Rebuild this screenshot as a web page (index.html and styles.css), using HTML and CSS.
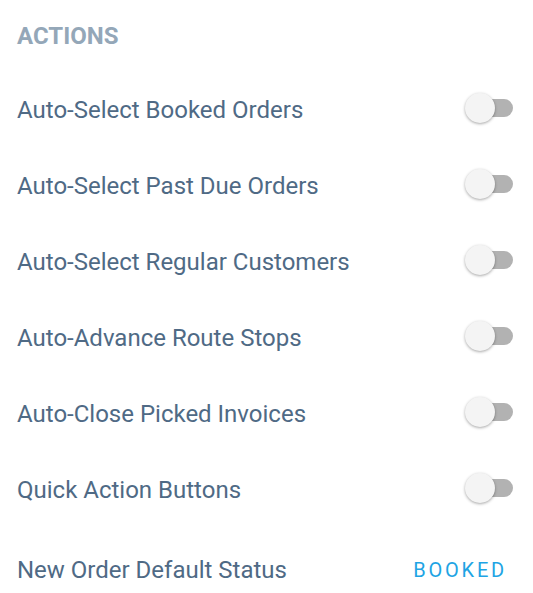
FILE: index.html
```html
<!DOCTYPE html>
<html>
<head>
    <title>Settings</title>
    <link rel="stylesheet" href="styles.css">
</head>
<body>
<div class="section-title">ACTIONS</div>

<ul class="settings-list">
    <li><span class="label">Auto-Select Booked Orders</span><span class="toggle"><span class="knob"></span></span></li>
    <li><span class="label">Auto-Select Past Due Orders</span><span class="toggle"><span class="knob"></span></span></li>
    <li><span class="label">Auto-Select Regular Customers</span><span class="toggle"><span class="knob"></span></span></li>
    <li><span class="label">Auto-Advance Route Stops</span><span class="toggle"><span class="knob"></span></span></li>
    <li><span class="label">Auto-Close Picked Invoices</span><span class="toggle"><span class="knob"></span></span></li>
    <li><span class="label">Quick Action Buttons</span><span class="toggle"><span class="knob"></span></span></li>
    <li class="value-row"><span class="label">New Order Default Status</span><span class="value">BOOKED</span></li>
</ul>
</body>
</html>
```

FILE: styles.css
```css
body {
    margin: 0;
    padding: 2px 17px 0 17px;
    font-family: Roboto, "Noto Sans", sans-serif;
    background-color: #FFFFFF;
}

.section-title {
    height: 68px;
    line-height: 68px;
    font-size: 24px;
    font-weight: bold;
    color: #94A7B8;
}

.settings-list {
    list-style: none;
    margin: 0;
    padding: 0;
}
.settings-list li {
    height: 76px;
    display: flex;
    justify-content: space-between;
    align-items: center;
    font-size: 24px;
    color: #4F6A85;
}
.settings-list li.value-row {
    padding-top: 4px;
}
.label {
    padding-top: 3px;
}

.toggle {
    position: relative;
    width: 34px;
    height: 18px;
    margin-right: 3px;
    border-radius: 9px;
    background-color: #B2B2B2;
}
.knob {
    position: absolute;
    left: -14px;
    top: -6px;
    width: 30px;
    height: 30px;
    border-radius: 50%;
    background-color: #F4F4F4;
    box-shadow: 0 1px 3px rgba(0, 0, 0, 0.35);
}

.value {
    padding-top: 3px;
    font-size: 20px;
    letter-spacing: 2.8px;
    color: #1EA4E4;
    margin-right: 9px;
}
```
